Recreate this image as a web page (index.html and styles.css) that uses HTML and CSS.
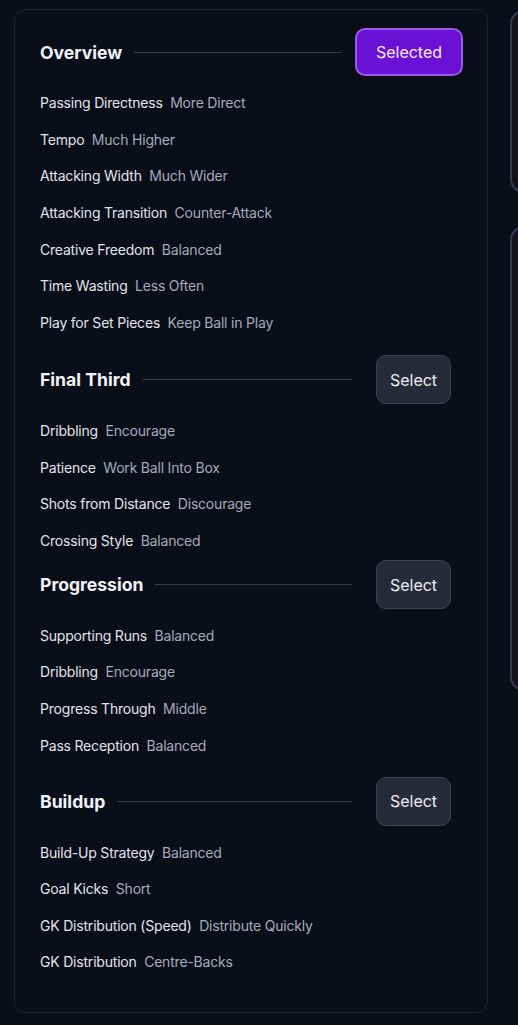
FILE: index.html
```html
<!DOCTYPE html>
<html lang="en">
<head>
<meta charset="utf-8">
<link rel="stylesheet" href="styles.css">
</head>
<body>
<div class="layout">
  <div class="card">
    <section class="section">
      <div class="section-head">
        <h2 class="title">Overview</h2>
        <div class="rule"></div>
        <button class="btn btn-selected">Selected</button>
      </div>
      <ul class="rows">
        <li><span class="label">Passing Directness</span><span class="value">More Direct</span></li>
        <li><span class="label">Tempo</span><span class="value">Much Higher</span></li>
        <li><span class="label">Attacking Width</span><span class="value">Much Wider</span></li>
        <li><span class="label">Attacking Transition</span><span class="value">Counter-Attack</span></li>
        <li><span class="label">Creative Freedom</span><span class="value">Balanced</span></li>
        <li><span class="label">Time Wasting</span><span class="value">Less Often</span></li>
        <li><span class="label">Play for Set Pieces</span><span class="value">Keep Ball in Play</span></li>
      </ul>
    </section>
    <section class="section section-final">
      <div class="section-head">
        <h2 class="title">Final Third</h2>
        <div class="rule"></div>
        <button class="btn">Select</button>
      </div>
      <ul class="rows">
        <li><span class="label">Dribbling</span><span class="value">Encourage</span></li>
        <li><span class="label">Patience</span><span class="value">Work Ball Into Box</span></li>
        <li><span class="label">Shots from Distance</span><span class="value">Discourage</span></li>
        <li><span class="label">Crossing Style</span><span class="value">Balanced</span></li>
      </ul>
    </section>
    <section class="section section-progression">
      <div class="section-head">
        <h2 class="title">Progression</h2>
        <div class="rule"></div>
        <button class="btn">Select</button>
      </div>
      <ul class="rows">
        <li><span class="label">Supporting Runs</span><span class="value">Balanced</span></li>
        <li><span class="label">Dribbling</span><span class="value">Encourage</span></li>
        <li><span class="label">Progress Through</span><span class="value">Middle</span></li>
        <li><span class="label">Pass Reception</span><span class="value">Balanced</span></li>
      </ul>
    </section>
    <section class="section section-buildup">
      <div class="section-head">
        <h2 class="title">Buildup</h2>
        <div class="rule"></div>
        <button class="btn">Select</button>
      </div>
      <ul class="rows">
        <li><span class="label">Build-Up Strategy</span><span class="value">Balanced</span></li>
        <li><span class="label">Goal Kicks</span><span class="value">Short</span></li>
        <li><span class="label">GK Distribution (Speed)</span><span class="value">Distribute Quickly</span></li>
        <li><span class="label">GK Distribution</span><span class="value">Centre-Backs</span></li>
      </ul>
    </section>
  </div>
  <div class="side">
    <div class="side-card side-card-top"></div>
    <div class="side-card side-card-main"></div>
  </div>
</div>
</body>
</html>
```

FILE: styles.css
```css
* { box-sizing: border-box; }

html, body {
  margin: 0;
  padding: 0;
  background: #0a0e19;
  height: 100%;
  overflow: hidden;
}

body {
  font-family: Inter, "Noto Sans", sans-serif;
  color: #e1e3ea;
}

.layout {
  display: flex;
  align-items: flex-start;
  gap: 22px;
  width: 518px;
  overflow: hidden;
  padding: 9px 0 0 14px;
}

.card {
  flex: 0 0 474px;
  height: 1004px;
  border: 1px solid #1e222d;
  border-radius: 11px;
  padding: 18px 36px 0 25px;
}

.section-final { margin-top: 15px; }
.section-progression { margin-top: 2px; }
.section-buildup { margin-top: 14px; }

.section-head {
  display: flex;
  align-items: center;
  height: 48px;
}

.title {
  margin: 0;
  font-size: 17.6px;
  font-weight: 700;
  color: #f1f2f6;
  letter-spacing: 0;
}

.rule {
  flex: 1;
  height: 1px;
  background: #373b48;
  margin: 0 24px 0 12px;
}

.btn {
  font-family: inherit;
  font-size: 16px;
  color: #eceef3;
  background: #292a39;
  border: 1.5px solid #414352;
  border-radius: 10px;
  height: 49px;
  padding: 0;
  width: 75px;
  flex: 0 0 auto;
}

.btn-selected {
  width: 108px;
  height: 48px;
  margin-left: -11px;
  margin-right: -12px;
  background: #6b11d6;
  border: 2px solid #9a5ae8;
  color: #f3ecff;
}

.rows {
  list-style: none;
  margin: 8.5px 0 0;
  padding: 0;
}

.rows li {
  height: 36.6px;
  display: flex;
  align-items: center;
  gap: 7.5px;
  font-size: 14px;
  letter-spacing: -0.2px;
}

.label { color: #e2e4ea; }
.value { color: #a6aabc; }

.side {
  flex: 0 0 60px;
  display: flex;
  flex-direction: column;
  gap: 33px;
  padding-top: 1px;
}

.side-card {
  width: 60px;
  border: 2px solid #383950;
  border-radius: 14px;
  background: #12131f;
}

.side-card-top { height: 183px; }
.side-card-main { height: 465px; }
```
